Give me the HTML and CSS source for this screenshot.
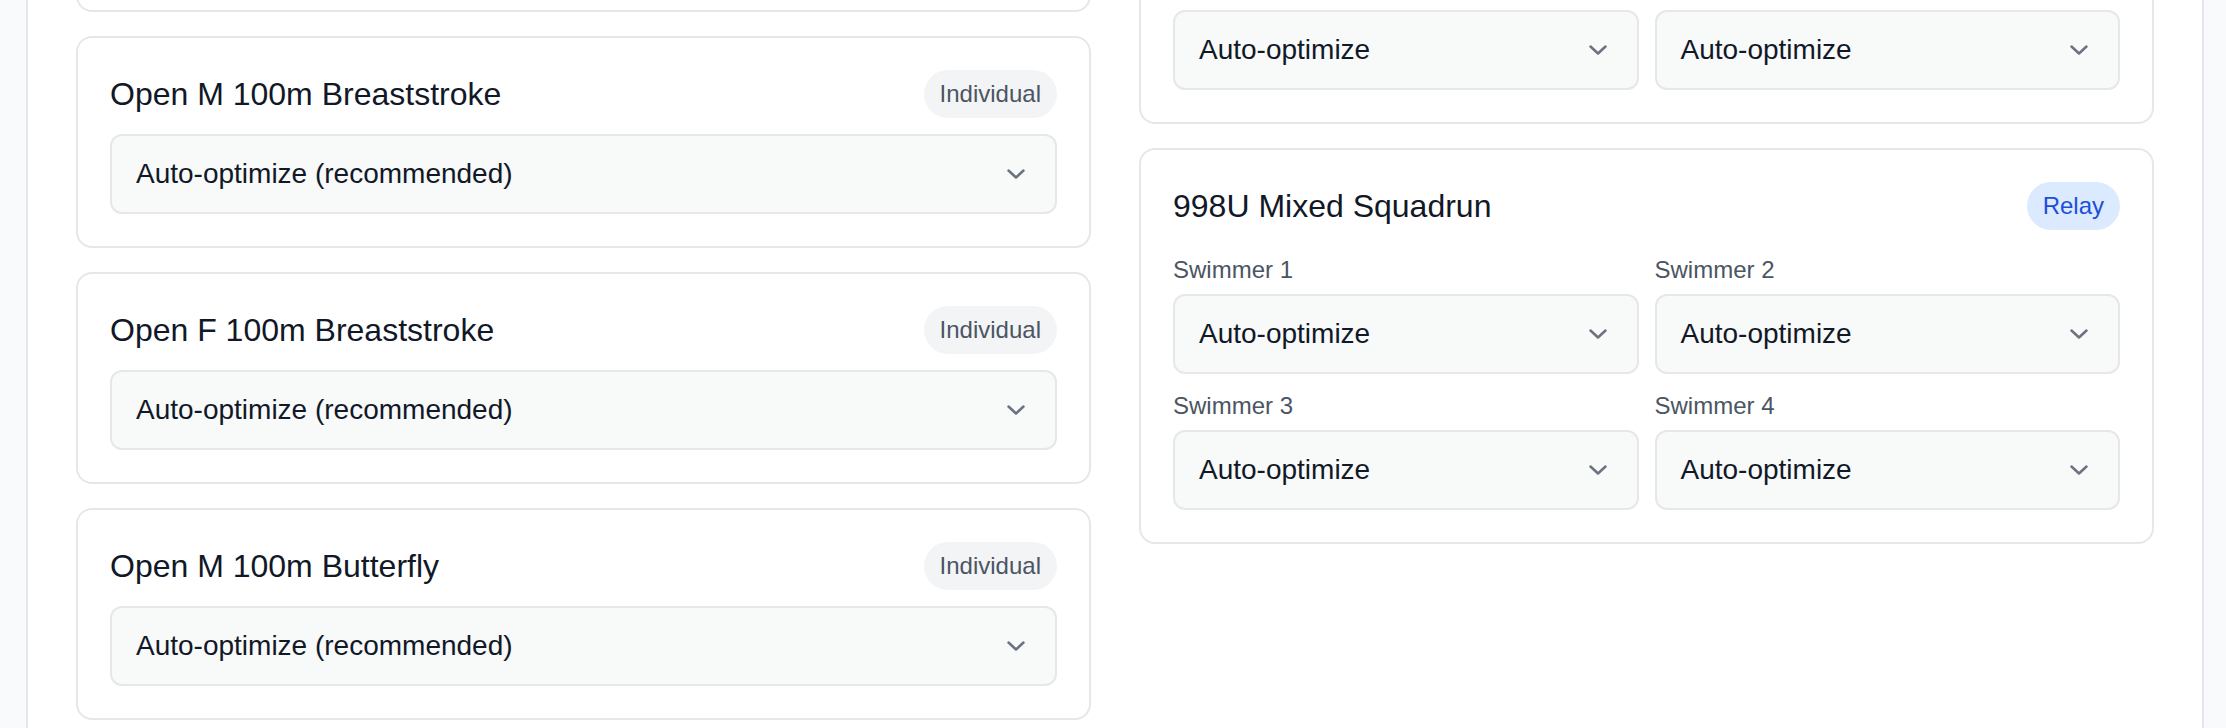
FILE: index.html
```html
<!DOCTYPE html>
<html lang="en">
<head>
<meta charset="utf-8">
<title>Event assignments</title>
<link rel="stylesheet" href="styles.css">
</head>
<body>
<div class="panel">
  <div class="columns">
    <div class="col col-left">
      <div class="card card-stub"></div>
      <div class="card">
        <div class="card-head">
          <h3 class="title">Open M 100m Breaststroke</h3>
          <span class="badge">Individual</span>
        </div>
        <div class="select"><span>Auto-optimize (recommended)</span><svg class="chev" width="18" height="10" viewBox="0 0 18 10"><path d="M1.5 1.5 9 8.5 16.5 1.5"/></svg></div>
      </div>
      <div class="card">
        <div class="card-head">
          <h3 class="title">Open F 100m Breaststroke</h3>
          <span class="badge">Individual</span>
        </div>
        <div class="select"><span>Auto-optimize (recommended)</span><svg class="chev" width="18" height="10" viewBox="0 0 18 10"><path d="M1.5 1.5 9 8.5 16.5 1.5"/></svg></div>
      </div>
      <div class="card">
        <div class="card-head">
          <h3 class="title">Open M 100m Butterfly</h3>
          <span class="badge">Individual</span>
        </div>
        <div class="select"><span>Auto-optimize (recommended)</span><svg class="chev" width="18" height="10" viewBox="0 0 18 10"><path d="M1.5 1.5 9 8.5 16.5 1.5"/></svg></div>
      </div>
    </div>
    <div class="col col-right">
      <div class="card">
        <div class="swimmers swimmers-cut">
          <div class="select"><span>Auto-optimize</span><svg class="chev" width="18" height="10" viewBox="0 0 18 10"><path d="M1.5 1.5 9 8.5 16.5 1.5"/></svg></div>
          <div class="select"><span>Auto-optimize</span><svg class="chev" width="18" height="10" viewBox="0 0 18 10"><path d="M1.5 1.5 9 8.5 16.5 1.5"/></svg></div>
        </div>
      </div>
      <div class="card">
        <div class="card-head">
          <h3 class="title">998U Mixed Squadrun</h3>
          <span class="badge badge-relay">Relay</span>
        </div>
        <div class="swimmers">
          <div class="swimmer"><div class="label">Swimmer 1</div><div class="select"><span>Auto-optimize</span><svg class="chev" width="18" height="10" viewBox="0 0 18 10"><path d="M1.5 1.5 9 8.5 16.5 1.5"/></svg></div></div>
          <div class="swimmer"><div class="label">Swimmer 2</div><div class="select"><span>Auto-optimize</span><svg class="chev" width="18" height="10" viewBox="0 0 18 10"><path d="M1.5 1.5 9 8.5 16.5 1.5"/></svg></div></div>
          <div class="swimmer"><div class="label">Swimmer 3</div><div class="select"><span>Auto-optimize</span><svg class="chev" width="18" height="10" viewBox="0 0 18 10"><path d="M1.5 1.5 9 8.5 16.5 1.5"/></svg></div></div>
          <div class="swimmer"><div class="label">Swimmer 4</div><div class="select"><span>Auto-optimize</span><svg class="chev" width="18" height="10" viewBox="0 0 18 10"><path d="M1.5 1.5 9 8.5 16.5 1.5"/></svg></div></div>
        </div>
      </div>
    </div>
  </div>
</div>
</body>
</html>
```

FILE: styles.css
```css
html, body {
  margin: 0;
  padding: 0;
}

body {
  background: #f9fafb;
  font-family: "Liberation Sans", Arial, Helvetica, sans-serif;
  height: 728px;
  overflow: hidden;
}

.panel {
  margin: 0 22px 0 26px;
  background: #ffffff;
  border-left: 2px solid #e5e7eb;
  border-right: 2px solid #e5e7eb;
  padding: 0 48px;
  min-height: 800px;
}

.columns {
  display: grid;
  grid-template-columns: 1fr 1fr;
  column-gap: 48px;
  align-items: start;
  margin-top: -24px;
}

.col {
  display: flex;
  flex-direction: column;
  gap: 24px;
}

.card {
  border: 2px solid #e5e7eb;
  border-radius: 16px;
  padding: 32px;
  background: #ffffff;
}

.card-stub {
  box-sizing: border-box;
  height: 36px;
  padding: 0;
  border-top-left-radius: 0;
  border-top-right-radius: 0;
}

.card-head {
  display: flex;
  justify-content: space-between;
  align-items: center;
}

.title {
  margin: 0;
  font-size: 32px;
  line-height: 48px;
  font-weight: 500;
  color: #111827;
}

.badge {
  font-size: 24px;
  line-height: 32px;
  padding: 8px 16px;
  border-radius: 9999px;
  background: #f3f4f6;
  color: #4b5563;
}

.badge-relay {
  background: #dbeafe;
  color: #1d4ed8;
}

.select {
  margin-top: 16px;
  height: 80px;
  box-sizing: border-box;
  border: 2px solid #e5e7eb;
  border-radius: 12px;
  background: #f8f9f9;
  display: flex;
  align-items: center;
  justify-content: space-between;
  padding: 0 30px 0 24px;
  font-size: 28px;
  color: #111827;
}

.chev {
  display: block;
  flex: none;
}

.chev path {
  fill: none;
  stroke: #6b7280;
  stroke-width: 2.5;
  stroke-linecap: round;
  stroke-linejoin: round;
}

.swimmers {
  margin-top: 24px;
  display: grid;
  grid-template-columns: 1fr 1fr;
  column-gap: 16px;
  row-gap: 16px;
}

.swimmers-cut {
  margin-top: 0;
}

.swimmers-cut .select {
  margin-top: 0;
}

.label {
  font-size: 24px;
  line-height: 32px;
  color: #4b5563;
}

.swimmer .select {
  margin-top: 8px;
}
```
